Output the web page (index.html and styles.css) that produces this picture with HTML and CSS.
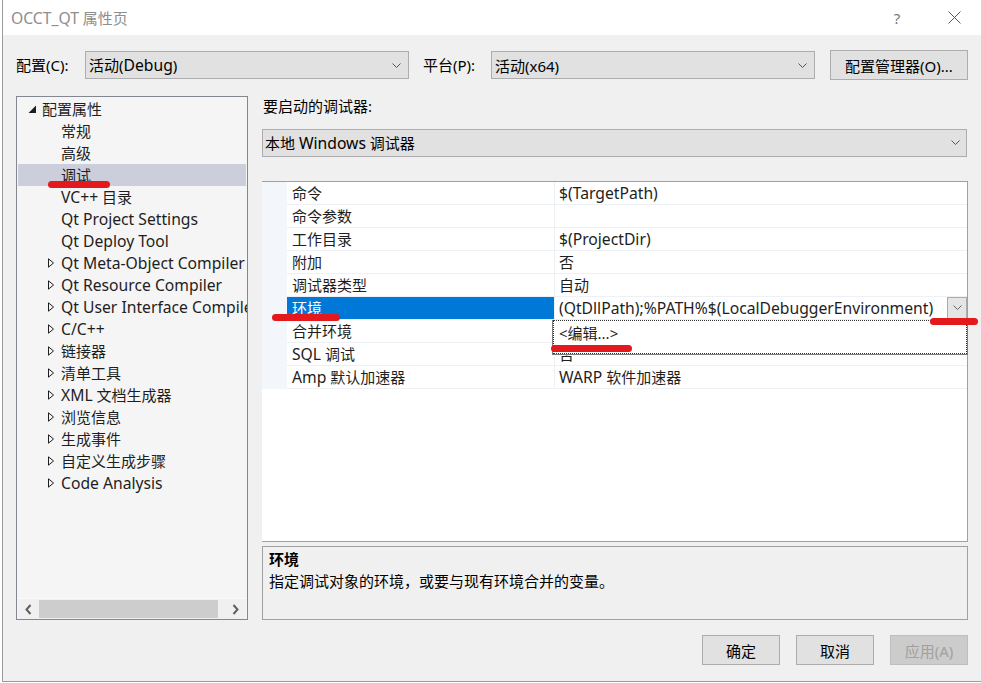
FILE: index.html
```html
<!DOCTYPE html>
<html lang="zh-CN">
<head>
<meta charset="utf-8">
<title>OCCT_QT 属性页</title>
<link rel="stylesheet" href="styles.css">
</head>
<body>
<div class="dialog">
  <div class="titlebar">
    <span class="title"><span class="en">OCCT_QT</span> 属性页</span>
    <div class="tb-btns">
      <span class="tb-help">?</span>
      <span class="tb-close"><svg width="13" height="13" viewBox="0 0 13 13"><path d="M0.5 0.5 L12.5 12.5 M12.5 0.5 L0.5 12.5" stroke="#555" stroke-width="1" fill="none"/></svg></span>
    </div>
  </div>

  <div class="content">
    <div class="config-row">
      <span class="lbl lbl-config">配置(C):</span>
      <div class="combo combo-config"><span>活动(<span class="en">Debug</span>)</span><svg class="chev" width="9" height="5" viewBox="0 0 9 5"><path d="M0.5 0.5 L4.5 4.5 L8.5 0.5" stroke="#555" fill="none"/></svg></div>
      <span class="lbl lbl-plat">平台(P):</span>
      <div class="combo combo-plat"><span>活动(x64)</span><svg class="chev" width="9" height="5" viewBox="0 0 9 5"><path d="M0.5 0.5 L4.5 4.5 L8.5 0.5" stroke="#555" fill="none"/></svg></div>
      <button class="btn btn-mgr">配置管理器(O)...</button>
    </div>

    <div class="main">
      <div class="tree">
        <div class="tree-items">
          <div class="node root"><span class="twisty"><svg width="9" height="9" viewBox="0 0 9 9"><path d="M8 0.5 L8 8 L0.5 8 Z" fill="#1e1e1e"/></svg></span>配置属性</div>
          <div class="node child"><span class="twisty"></span>常规</div>
          <div class="node child"><span class="twisty"></span>高级</div>
          <div class="node child selected"><span class="twisty"></span>调试</div>
          <div class="node child"><span class="twisty"></span><span class="en">VC++</span>&nbsp;目录</div>
          <div class="node child"><span class="twisty"></span><span class="en">Qt Project Settings</span></div>
          <div class="node child"><span class="twisty"></span><span class="en">Qt Deploy Tool</span></div>
          <div class="node child"><span class="twisty"><svg width="8" height="10" viewBox="0 0 8 10"><path d="M1.5 0.8 L6.5 5 L1.5 9.2 Z" fill="none" stroke="#1e1e1e"/></svg></span><span class="en">Qt Meta-Object Compiler</span></div>
          <div class="node child"><span class="twisty"><svg width="8" height="10" viewBox="0 0 8 10"><path d="M1.5 0.8 L6.5 5 L1.5 9.2 Z" fill="none" stroke="#1e1e1e"/></svg></span><span class="en">Qt Resource Compiler</span></div>
          <div class="node child"><span class="twisty"><svg width="8" height="10" viewBox="0 0 8 10"><path d="M1.5 0.8 L6.5 5 L1.5 9.2 Z" fill="none" stroke="#1e1e1e"/></svg></span><span class="en">Qt User Interface Compiler</span></div>
          <div class="node child"><span class="twisty"><svg width="8" height="10" viewBox="0 0 8 10"><path d="M1.5 0.8 L6.5 5 L1.5 9.2 Z" fill="none" stroke="#1e1e1e"/></svg></span><span class="en">C/C++</span></div>
          <div class="node child"><span class="twisty"><svg width="8" height="10" viewBox="0 0 8 10"><path d="M1.5 0.8 L6.5 5 L1.5 9.2 Z" fill="none" stroke="#1e1e1e"/></svg></span>链接器</div>
          <div class="node child"><span class="twisty"><svg width="8" height="10" viewBox="0 0 8 10"><path d="M1.5 0.8 L6.5 5 L1.5 9.2 Z" fill="none" stroke="#1e1e1e"/></svg></span>清单工具</div>
          <div class="node child"><span class="twisty"><svg width="8" height="10" viewBox="0 0 8 10"><path d="M1.5 0.8 L6.5 5 L1.5 9.2 Z" fill="none" stroke="#1e1e1e"/></svg></span><span class="en">XML</span>&nbsp;文档生成器</div>
          <div class="node child"><span class="twisty"><svg width="8" height="10" viewBox="0 0 8 10"><path d="M1.5 0.8 L6.5 5 L1.5 9.2 Z" fill="none" stroke="#1e1e1e"/></svg></span>浏览信息</div>
          <div class="node child"><span class="twisty"><svg width="8" height="10" viewBox="0 0 8 10"><path d="M1.5 0.8 L6.5 5 L1.5 9.2 Z" fill="none" stroke="#1e1e1e"/></svg></span>生成事件</div>
          <div class="node child"><span class="twisty"><svg width="8" height="10" viewBox="0 0 8 10"><path d="M1.5 0.8 L6.5 5 L1.5 9.2 Z" fill="none" stroke="#1e1e1e"/></svg></span>自定义生成步骤</div>
          <div class="node child"><span class="twisty"><svg width="8" height="10" viewBox="0 0 8 10"><path d="M1.5 0.8 L6.5 5 L1.5 9.2 Z" fill="none" stroke="#1e1e1e"/></svg></span><span class="en">Code Analysis</span></div>
        </div>
        <div class="hscroll">
          <span class="sb-btn"><svg width="7" height="11" viewBox="0 0 7 11"><path d="M5.5 1 L1.5 5.5 L5.5 10" stroke="#606060" stroke-width="2" fill="none"/></svg></span>
          <div class="sb-track"><div class="sb-thumb"></div></div>
          <span class="sb-btn"><svg width="7" height="11" viewBox="0 0 7 11"><path d="M1.5 1 L5.5 5.5 L1.5 10" stroke="#606060" stroke-width="2" fill="none"/></svg></span>
        </div>
      </div>

      <div class="right">
        <div class="dbg-label">要启动的调试器:</div>
        <div class="combo combo-dbg"><span>本地 <span class="en">Windows</span> 调试器</span><svg class="chev" width="9" height="5" viewBox="0 0 9 5"><path d="M0.5 0.5 L4.5 4.5 L8.5 0.5" stroke="#555" fill="none"/></svg></div>

        <div class="pgrid">
          <div class="prow"><div class="pmargin"></div><div class="pname">命令</div><div class="pval"><span class="en">$(TargetPath)</span></div></div>
          <div class="prow"><div class="pmargin"></div><div class="pname">命令参数</div><div class="pval"></div></div>
          <div class="prow"><div class="pmargin"></div><div class="pname">工作目录</div><div class="pval"><span class="en">$(ProjectDir)</span></div></div>
          <div class="prow"><div class="pmargin"></div><div class="pname">附加</div><div class="pval">否</div></div>
          <div class="prow"><div class="pmargin"></div><div class="pname">调试器类型</div><div class="pval">自动</div></div>
          <div class="prow active"><div class="pmargin"></div><div class="pname">环境</div><div class="pval"><span class="pval-text en">(QtDllPath);%PATH%$(LocalDebuggerEnvironment)</span><span class="ddbtn"><svg width="9" height="5" viewBox="0 0 9 5"><path d="M0.5 0.5 L4.5 4.5 L8.5 0.5" stroke="#666" fill="none"/></svg></span></div></div>
          <div class="prow"><div class="pmargin"></div><div class="pname">合并环境</div><div class="pval"></div></div>
          <div class="prow"><div class="pmargin"></div><div class="pname"><span class="en">SQL</span> 调试</div><div class="pval">否</div></div>
          <div class="prow"><div class="pmargin"></div><div class="pname"><span class="en">Amp</span> 默认加速器</div><div class="pval"><span class="en">WARP</span>&nbsp;软件加速器</div></div>
        </div>

        <div class="desc">
          <div class="desc-title">环境</div>
          <div class="desc-text">指定调试对象的环境，或要与现有环境合并的变量。</div>
        </div>
      </div>
    </div>

    <div class="footer">
      <button class="btn btn-foot">确定</button>
      <button class="btn btn-foot">取消</button>
      <button class="btn btn-foot disabled">应用(A)</button>
    </div>
  </div>

  <div class="popup"><div class="popup-item">&lt;编辑...&gt;</div></div>

  <span class="mark mark-tree"></span>
  <span class="mark mark-env"></span>
  <span class="mark mark-edit"></span>
  <span class="mark mark-btn"></span>
</div>
</body>
</html>
```
FILE: styles.css
```css
* { box-sizing: border-box; }
html, body { margin: 0; padding: 0; }
body {
  width: 981px;
  height: 683px;
  overflow: hidden;
  background: #ffffff;
  font-family: "Noto Sans", "Noto Sans CJK SC", sans-serif;
  font-size: 15px;
  color: #000;
}
.en { font-size: 15.7px; }
.dialog {
  position: relative;
  margin-left: 2px;
  width: 979px;
  height: 682px;
  border-left: 1px solid #9c9c9c;
  border-bottom: 1px solid #9c9c9c;
  background: #f0f0f0;
}
.titlebar {
  height: 35px;
  background: #ffffff;
  display: flex;
  align-items: center;
}
.title {
  padding-left: 8px;
  color: #8e8e8e;
  font-size: 15px;
}
.tb-btns {
  margin-left: auto;
  display: flex;
  align-items: center;
  padding-right: 17px;
}
.tb-help {
  width: 20px;
  text-align: center;
  color: #777;
  font-size: 15px;
  margin-right: 37px;
}
.tb-close {
  width: 20px;
  display: flex;
  justify-content: center;
}
.content {
  padding: 15px 13px 0 13px;
}
.config-row {
  display: flex;
  align-items: center;
  height: 30px;
}
.lbl { line-height: 20px; }
.lbl-config { width: 69px; }
.lbl-plat { width: 68px; margin-left: 14px; }
.combo {
  display: flex;
  align-items: center;
  height: 28px;
  background: #e1e1e1;
  border: 1px solid #adadad;
  padding-left: 3px;
  padding-right: 7px;
}
.combo > span { flex: 1; white-space: nowrap; }
.combo-config, .combo-plat { width: 324px; }
.btn {
  font-family: inherit;
  font-size: 15px;
  color: #000;
  background: #e1e1e1;
  border: 1px solid #adadad;
  height: 30px;
  padding: 0;
}
.btn-mgr { width: 138px; margin-left: 15px; }
.main {
  margin-top: 16px;
  display: flex;
  gap: 14px;
  height: 524px;
}
.tree {
  width: 232px;
  border: 1px solid #828790;
  background: #f5f5f5;
  display: flex;
  flex-direction: column;
  overflow: hidden;
}
.tree-items {
  flex: 1;
  padding-top: 1px;
}
.node {
  height: 22px;
  line-height: 22px;
  margin: 0 1px;
  display: flex;
  align-items: center;
  white-space: nowrap;
  color: #1e1e1e;
}
.node.root { padding-left: 6px; }
.node.child { padding-left: 25px; }
.node.selected { background: #cccedb; }
.twisty {
  width: 16px;
  height: 22px;
  display: inline-flex;
  align-items: center;
  justify-content: center;
  margin-right: 2px;
  flex-shrink: 0;
}
.hscroll {
  height: 21px;
  display: flex;
  align-items: stretch;
  background: #f0f0f0;
  border-top: 1px solid #fafafa;
  margin: 0 1px;
}
.sb-btn {
  width: 21px;
  display: flex;
  align-items: center;
  justify-content: center;
}
.sb-track {
  flex: 1;
  padding: 1px 0;
  display: flex;
}
.sb-thumb {
  width: 179px;
  background: #cdcdcd;
}
.right {
  width: 706px;
  display: flex;
  flex-direction: column;
}
.dbg-label {
  line-height: 20px;
  height: 20px;
  padding-left: 1px;
}
.combo-dbg {
  margin-top: 13px;
  width: 705px;
  padding-left: 2px;
  padding-right: 6px;
}
.pgrid {
  margin-top: 24px;
  height: 362px;
  background: #ffffff;
  border-top: 1px solid #a0a0a0;
  border-right: 1px solid #a0a0a0;
  border-bottom: 1px solid #a0a0a0;
}
.prow {
  display: grid;
  grid-template-columns: 25px 267px 1fr;
  height: 23px;
}
.pmargin { background: #f3f6fb; }
.pname, .pval {
  border-bottom: 1px solid #edf0f5;
  line-height: 22px;
  white-space: nowrap;
  overflow: hidden;
}
.pname { padding-left: 5px; color: #1e1e1e; }
.pval {
  border-left: 1px solid #edf0f5;
  padding-left: 4px;
  display: flex;
  color: #1e1e1e;
}
.pval-text { flex: 1; overflow: hidden; }
.prow.active .pname { background: #0078d7; color: #ffffff; }
.ddbtn {
  width: 20px;
  height: 22px;
  background: #e5e5e5;
  border: 1px solid #acacac;
  display: flex;
  align-items: center;
  justify-content: center;
}
.desc {
  margin-top: 4px;
  height: 74px;
  border: 1px solid #a0a0a0;
  padding: 1px 6px 0 6px;
}
.desc-title {
  font-weight: bold;
  line-height: 22px;
}
.desc-text {
  line-height: 22px;
}
.footer {
  margin-top: 15px;
  display: flex;
  justify-content: flex-end;
  gap: 16px;
}
.btn-foot { width: 78px; }
.btn-foot.disabled {
  background: #cccccc;
  border-color: #bfbfbf;
  color: #a0a0a0;
}
.popup {
  position: absolute;
  left: 549px;
  top: 320px;
  width: 416px;
  height: 35px;
  background: #ffffff;
  border: 1px solid #7a7a7a;
  border-top: none;
  padding: 0;
}
.popup-item {
  height: 100%;
  border: 1px dotted #333;
  padding-left: 5px;
  line-height: 24px;
  color: #1e1e1e;
}
.mark {
  position: absolute;
  height: 7px;
  border-radius: 4px;
  background: #e3191d;
}
.mark-tree { left: 45px; top: 181px; width: 62px; }
.mark-env { left: 269px; top: 314px; width: 68px; }
.mark-edit { left: 548px; top: 345px; width: 81px; }
.mark-btn { left: 927px; top: 318px; width: 48px; }
```
